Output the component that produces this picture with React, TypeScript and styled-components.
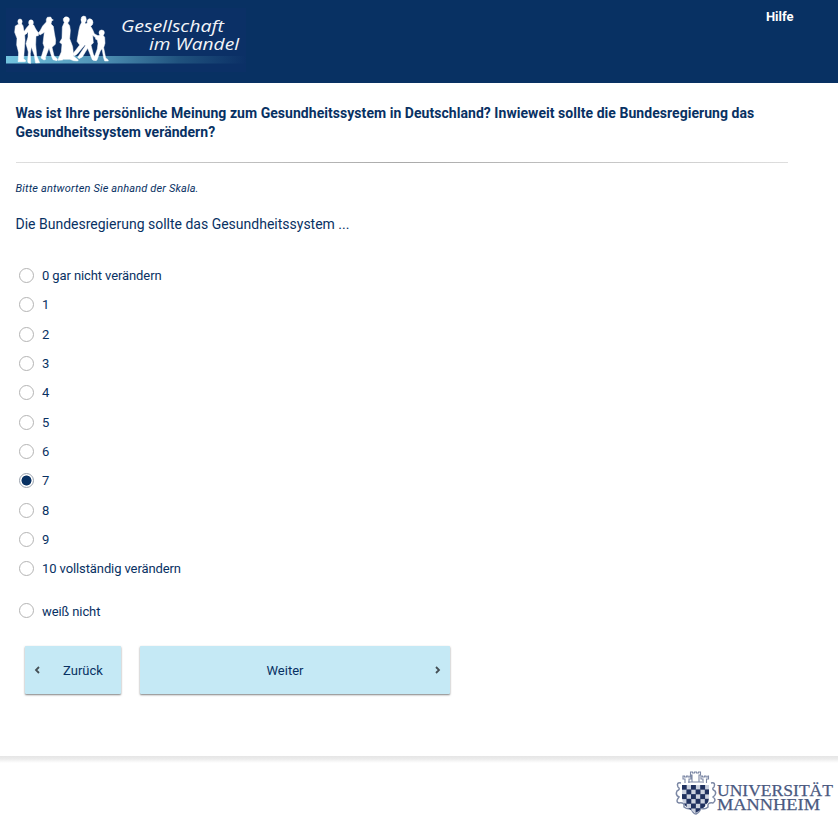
import React, { useState } from "react";
import styled, { createGlobalStyle } from "styled-components";

const navy = "#083163";

const GlobalStyle = createGlobalStyle`
  * { box-sizing: border-box; }
  body { margin: 0; background: #fff; color: ${navy}; font-family: Roboto, "Liberation Sans", sans-serif; }
`;

const Page = styled.div`
  height: 825px;
  display: flex;
  flex-direction: column;
  overflow: hidden;
`;

const Header = styled.header`
  height: 83px;
  flex: none;
  display: flex;
  justify-content: space-between;
  background: ${navy};
`;

const BrandLogo = styled.svg`
  display: block;
  width: 260px;
  height: 83px;
`;

const HelpLink = styled.a`
  margin: 9px 44.5px 0 0;
  font-size: 13px;
  line-height: 16px;
  font-weight: 700;
  color: #fff;
`;

const Main = styled.main`
  flex: none;
  height: 673px;
  padding: 21px 50px 0 15.5px;
  display: flex;
  flex-direction: column;
`;

const Question = styled.h1`
  margin: 0;
  font-size: 14px;
  line-height: 19px;
  font-weight: 700;
  letter-spacing: 0.045px;
`;

const Divider = styled.div`
  flex: none;
  height: 1px;
  margin-top: 20px;
  background: linear-gradient(90deg, #dedede, #aaa 50%, #dedede);
`;

const Hint = styled.p`
  margin: 18px 0 0;
  font-size: 11px;
  line-height: 15px;
  font-style: italic;
  letter-spacing: 0.15px;
`;

const Prompt = styled.p`
  margin: 19px 0 0;
  font-size: 14px;
  line-height: 19px;
`;

const Options = styled.div`
  margin-top: 27px;
  padding-left: 3.5px;
  display: flex;
  flex-direction: column;
`;

const Option = styled.label<{ $apart?: boolean }>`
  height: 29.3px;
  margin-top: ${(p) => (p.$apart ? "13px" : "0")};
  display: flex;
  align-items: center;
  gap: 8px;
  font-size: 13px;
  line-height: 17px;
  letter-spacing: -0.1px;
`;

const OptionText = styled.span<{ $apart?: boolean }>`
  padding-top: ${(p) => (p.$apart ? "2px" : "0")};
`;

const Radio = styled.input`
  appearance: none;
  flex: none;
  width: 15px;
  height: 15px;
  margin: 0;
  border: 1px solid #b4b4b4;
  border-radius: 50%;
  background: #fff;
  &:checked {
    border-color: #9ba3ae;
    background: radial-gradient(circle, ${navy} 4.7px, #fff 5.3px);
  }
`;

const Actions = styled.div`
  display: flex;
  gap: 19px;
  margin: 20px 0 0 9.5px;
`;

const Button = styled.button<{ $width: number }>`
  width: ${(p) => p.$width}px;
  height: 48px;
  padding: 1px 9px 0;
  border: 0;
  border-radius: 1px;
  display: grid;
  grid-template-columns: 6px 1fr 6px;
  align-items: center;
  background: #c5e9f5;
  color: ${navy};
  box-shadow: 0 1px 2px rgba(0, 0, 0, 0.5);
  font: 13px/17px Roboto, sans-serif;
`;

const ButtonText = styled.span<{ $left?: number; $right?: number }>`
  grid-column: 2;
  padding: 0 ${(p) => p.$right ?? 0}px 0 ${(p) => p.$left ?? 0}px;
  text-align: center;
`;

const Chevron = styled.svg<{ $next?: boolean }>`
  grid-row: 1;
  grid-column: ${(p) => (p.$next ? 3 : 1)};
  width: 6px;
  height: 8px;
  fill: none;
  stroke: #454f55;
  stroke-width: 1.8;
`;

const Footer = styled.footer`
  flex: 1;
  display: flex;
  justify-content: flex-end;
  background: linear-gradient(#e5e5e5, #ececec 3px, #fff 7px);
`;

const UniversityLogo = styled.svg`
  display: block;
  width: 178px;
  height: 69px;
`;

function SocietyLogo() {
  return (
    <BrandLogo viewBox="0 0 260 83" role="img" aria-label="Gesellschaft im Wandel">
      <defs>
        <linearGradient id="band">
          <stop offset="0" stopColor="#72c4df" />
          <stop offset=".4" stopColor="#4f91b4" />
          <stop offset=".72" stopColor="#20527e" />
          <stop offset="1" stopColor="#0b3066" />
        </linearGradient>
      </defs>
      <path d="M6 8h240v64H6z" fill="#0b3066" />
      <path d="M6 56h240v7.5H6z" fill="url(#band)" />
      <g fill="#fff" stroke="#fff" strokeWidth="1.5" strokeLinejoin="round" transform="translate(10 12) scale(.33333)">
        <ellipse cx="30" cy="29" rx="6.5" ry="8" />
        <path d="M25 37 16 42l-2 19 7 18-1 20 6 23-1 21-1 6h20l4-2-7-7 2-29 2-26-1-17 7-4-9-6-3-17-4-5z" />
        <path d="M25 82l3 59h5l3-58z" />
        <ellipse cx="63" cy="32" rx="7" ry="8.5" />
        <path d="m58 38-8 9-10 15 4 6 10-8v15l-6 20 7 25-2 28 2 5 7 1-1-29 3-20 9 25 3 19 1 4 12-1-9-21-3-33 1-26 7-1 1-7-9-13-6-12z" />
        <path d="M109 30v-8l3-6 10-1 4 7 4 2-5 3-2 9 7 7 3 20 4 22-1 12-10 9 6 25 10 10-1 5-12-3-4-9-8-26-11 29 1 5-5 2-9-6 10-33-4-11 4-33-13 8-5-7 5-5 8-15z" />
      </g>
      <g fill="#fff" stroke="#fff" strokeWidth="1.5" strokeLinejoin="round" transform="translate(54 12) scale(.33333)">
        <path d="M31 31q-4-5-3-11 4-8 13-5 8 4 4 13l-4 5 6 8 2 14-2 25 9 24 3 29 14 11-2 3-12-1-11-4H28l-3 2-13 1 1-5 9-20 2-23-7-6 7-12 1-34z" />
        <path d="M83 31q-4-9 0-16 6-5 12-1l2 9q-1 6-4 9l2 4 5-3q-3-11 7-13 10 1 10 12-1 8-7 11l6 10 5 12 12 7 8 1-1 6-11 2-13-11 2 23-7 6 7 28 8 14 1 5-12-3-14-34-16 26-10 5-4-4 23-35-1-3-24 29-8 5-5-6 21-27-8-11 6-35 3-12z" />
        <ellipse cx="143" cy="62" rx="8" ry="8" />
        <path d="m136 70-7 3-5 8 6 3 2 11-2 16-8 22-5 9 1 3 11-1 10-27 5-7 5 28 3 9h11l-1-4-7-5-6-31 4-13-1-18-6-8z" />
      </g>
      <g fill="#f3f5f8" fontFamily="'Open Sans', 'Noto Sans', sans-serif" fontStyle="italic" fontSize="17">
        <text x="121" y="32" textLength="103" lengthAdjust="spacingAndGlyphs">Gesellschaft</text>
        <text x="149" y="50" textLength="90" lengthAdjust="spacingAndGlyphs">im Wandel</text>
      </g>
    </BrandLogo>
  );
}

const shieldCells = Array.from({ length: 36 }, (_, i) => ({ x: i % 6, y: Math.floor(i / 6) })).filter(
  (cell) => (cell.x + cell.y) % 2 === 0,
);

function MannheimLogo() {
  return (
    <UniversityLogo viewBox="660 756 178 69" role="img" aria-label="Universität Mannheim">
      <defs>
        <clipPath id="shield">
          <path d="M682 785h27v13q0 8-13.5 15Q682 806 682 798z" />
        </clipPath>
      </defs>
      <g fill="none" stroke="#7c88a5" strokeWidth="1.1">
        <path d="M685 783v-4h-2v-3h1.500v1h2v-1h1.500v1h2v-1h1v3h-2v4M692 782v-7h-1.500v-3h2v1h2v-1h2v1h2v-1h2v3H699v7M703 783v-4h-2v-3h1.500v1h2v-1h1.500v1h2v-1h.5v3h-2v4M688 782h14" />
        <path strokeWidth="1.5" d="M681 783q-5-1-3 4 3 2-1 4-2 4 2 6-4 5 0 6 6-1 5 4 4 3 7 1 2 6 5 6 3-1 5-6 4 2 7-1-1-5 5-4 4-3 0-6 4-3 2-6-4-2-1-4 2-5-3-4" />
      </g>
      <g clipPath="url(#shield)">
        <path d="M682 784h27v29h-27z" fill="#cbd1df" />
        {shieldCells.map(({ x, y }) => (
          <rect key={`${x}-${y}`} x={681.8 + x * 4.6} y={784.7 + y * 4.7} width="4.9" height="5" fill="#20315f" />
        ))}
      </g>
      <g fill="#4a597f" stroke="#4a597f" strokeWidth=".25" fontFamily="'Liberation Serif', serif" fontSize="17">
        <text x="717" y="795.5" textLength="116" lengthAdjust="spacingAndGlyphs">UNIVERSITÄT</text>
        <text x="717" y="810" textLength="103" lengthAdjust="spacingAndGlyphs">MANNHEIM</text>
      </g>
    </UniversityLogo>
  );
}

const answers = [
  "0 gar nicht verändern", "1", "2", "3", "4", "5", "6", "7", "8", "9",
  "10 vollständig verändern", "weiß nicht",
];

export default function App() {
  const [selected, setSelected] = useState(7);
  return (
    <>
      <GlobalStyle />
      <Page>
        <Header>
          <SocietyLogo />
          <HelpLink>Hilfe</HelpLink>
        </Header>
        <Main>
          <Question>
            Was ist Ihre persönliche Meinung zum Gesundheitssystem in Deutschland? Inwieweit sollte die Bundesregierung das Gesundheitssystem verändern?
          </Question>
          <Divider />
          <Hint>Bitte antworten Sie anhand der Skala.</Hint>
          <Prompt>Die Bundesregierung sollte das Gesundheitssystem ...</Prompt>
          <Options>
            {answers.map((answer, i) => (
              <Option key={answer} $apart={i === 11}>
                <Radio type="radio" name="answer" checked={selected === i} onChange={() => setSelected(i)} />
                <OptionText $apart={i === 11}>{answer}</OptionText>
              </Option>
            ))}
          </Options>
          <Actions>
            <Button type="button" $width={96}>
              <Chevron viewBox="0 0 6 8"><path d="M5 1 2 4l3 3" /></Chevron>
              <ButtonText $left={20}>Zurück</ButtonText>
            </Button>
            <Button type="button" $width={310}>
              <ButtonText $right={20}>Weiter</ButtonText>
              <Chevron $next viewBox="0 0 6 8"><path d="m1 1 3 3-3 3" /></Chevron>
            </Button>
          </Actions>
        </Main>
        <Footer>
          <MannheimLogo />
        </Footer>
      </Page>
    </>
  );
}
